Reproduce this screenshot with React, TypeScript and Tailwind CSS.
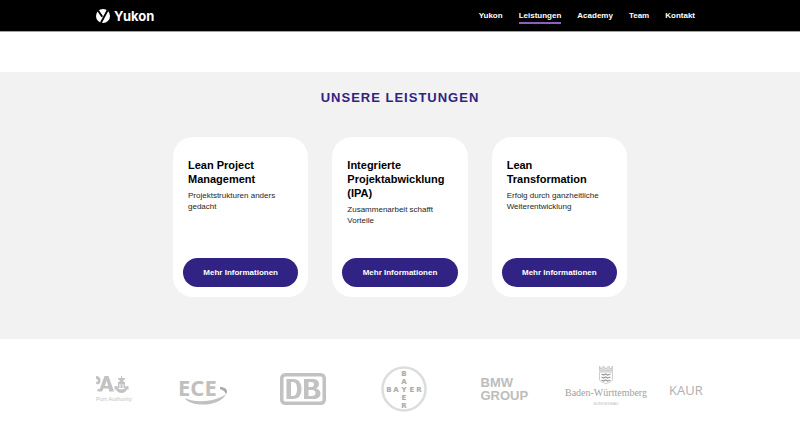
import React from 'react';

interface Service {
  title: string;
  text: string;
  href: string;
}

const navItems = [
  { label: 'Yukon', href: '#yukon', active: false },
  { label: 'Leistungen', href: '#leistungen', active: true },
  { label: 'Academy', href: '#academy', active: false },
  { label: 'Team', href: '#team', active: false },
  { label: 'Kontakt', href: '#kontakt', active: false }
];

const services: Service[] = [
  { title: 'Lean Project Management', text: 'Projektstrukturen anders gedacht', href: '#lean-project' },
  { title: 'Integrierte Projektabwicklung (IPA)', text: 'Zusammenarbeit schafft Vorteile', href: '#ipa' },
  { title: 'Lean Transformation', text: 'Erfolg durch ganzheitliche Weiterentwicklung', href: '#transformation' }
];

const YukonMark: React.FC = () => (
  <svg width="14" height="14" viewBox="0 0 14 14" aria-hidden="true">
    <circle cx="7" cy="7" r="7" fill="#fff" />
    <path d="M2 1.500 6.300 7.800M11.600 1.200 4.800 14" fill="none" stroke="#000" strokeWidth="1.900" />
  </svg>
);

const PortLogo: React.FC = () => (
  <svg width="55" height="36" viewBox="0 0 55 36" fill="#c2c2c2" role="img" aria-label="Port Authority">
    <path d="M0 5c3 0 4.500 1.800 4.500 4.500 0 2-.800 3.300-2.200 4L0 12.500v-1.500c1.200 0 1.800-.500 1.800-1.500S1.200 8 0 8Z" />
    <path d="M8.500 5h4L18 20.500h-4.600L12.500 17.500H7.500l-1.500 3H1.500V18h2.300Zm2.200 4.500L8.800 15h3.300Z" />
    <path d="M25 5h1v2h3v1.500h-1.500V11H29v6h-1.500v-4h-1v4h-2v-4h-1v4H22v-6h1.500V8.500H22V7h3Z" />
    <path d="m18.500 15 4 .500-1 1.200c1 1.100 2.300 1.700 4 1.700s3-.600 4-1.700l-1-1.200 4-.500v4l-1.200-.900C30 20.600 28 22 25.500 22s-4.500-1.400-5.800-3.900l-1.200.900Z" />
    <text x="0" y="30" fontFamily="Liberation Sans, sans-serif" fontSize="6">Port Authority</text>
  </svg>
);

const EceLogo: React.FC = () => (
  <svg width="54" height="44" viewBox="0 0 54 44" fill="#c0c0c0" role="img" aria-label="ECE">
    <text x="3" y="29" fontFamily="Noto Sans, sans-serif" fontSize="22" fontWeight="700">ECE</text>
    <path d="M45 20c4 0 7 1.500 7 4.500 0 1-.300 2-1 3-.800-2.800-2.800-4.500-6-5.500Z" fill="#aaa" />
    <path d="M10 31c9 4.500 24 4.500 36-1l5-2.500c-4 7-14 10.500-25 10-8-.400-14-2.500-16-6.500Z" />
  </svg>
);

const DbLogo: React.FC = () => (
  <svg width="46" height="32" viewBox="0 0 46 32" role="img" aria-label="DB">
    <rect x="1.750" y="1.750" width="42.500" height="28.500" rx="3.500" fill="none" stroke="#c2c2c2" strokeWidth="3.500" />
    <g fill="#c2c2c2" fillRule="evenodd">
      <path d="M6.500 6H13c6 0 8.500 4 8.500 10S19 26 13 26H6.500Zm4.500 3v14h1.500c3.500 0 4.500-2.500 4.500-7s-1-7-4.500-7Z" />
      <path d="M24 6h8c5 0 7 2 7 5 0 2.200-1.200 3.700-3 4.500 2.800.600 4.500 2.400 4.500 5 0 3.500-2.700 5.500-7 5.500H24Zm4.500 3v5h2c2.300 0 3.500-.900 3.500-2.600S33 9 31 9Zm0 8v6H32c2.300 0 3.500-1 3.500-3s-1.200-3-3.500-3Z" />
    </g>
  </svg>
);

const BayerLogo: React.FC = () => (
  <svg width="46" height="48" viewBox="0 0 46 48" role="img" aria-label="Bayer">
    <circle cx="23" cy="24" r="21.500" fill="none" stroke="#ddd" strokeWidth="2.500" />
    <g fill="#a8a8a8" fontFamily="DejaVu Sans, sans-serif" fontSize="7" fontWeight="700" textAnchor="middle">
      <text x="8" y="27">B</text>
      <text x="15" y="27">A</text>
      <text x="23" y="27">Y</text>
      <text x="31" y="27">E</text>
      <text x="38" y="27">R</text>
      <text x="23" y="11">B</text>
      <text x="23" y="19">A</text>
      <text x="23" y="35">E</text>
      <text x="23" y="43">R</text>
    </g>
  </svg>
);

const BmwLogo: React.FC = () => (
  <div className="w-12 text-[13px] leading-[13px] font-bold text-[#bdbdbd]">
    <div>BMW</div>
    <div>GROUP</div>
  </div>
);

const BadenLogo: React.FC = () => (
  <svg width="84" height="46" viewBox="0 0 84 46" role="img" aria-label="Baden-Württemberg Bundesbau">
    <g fill="none" stroke="#b8b8b8">
      <path d="m35.500 0 1.500 3 2.500-3L42 3l2.500-3L47 3l1.500-3v5h-13Z" fill="#ddd" strokeWidth=".6" />
      <path d="M35.500 6h13v7c0 2.500-3 3.500-6.500 4.500-3.500-1-6.500-2-6.500-4.500Z" strokeWidth=".7" />
      <path d="m37.500 8 2 1 2-1 2 1 3-1m-9 3 2 1 2-1 2 1 3-1m-9 3 2 1 2-1 2 1 3-1" stroke="#999" strokeWidth="1.2" />
    </g>
    <text x="42" y="30" textAnchor="middle" fill="#a0a0a0" fontFamily="Liberation Serif, serif" fontSize="10">Baden-Württemberg</text>
    <text x="42" y="39" textAnchor="middle" fill="#c0c0c0" fontFamily="Liberation Sans, sans-serif" fontSize="4">BUNDESBAU</text>
  </svg>
);

const KaurLogo: React.FC = () => (
  <svg width="35" height="20" viewBox="0 0 35 20" fill="#b0b0b0" role="img" aria-label="KAUR">
    <text x="0" y="16" fontFamily="Open Sans, sans-serif" fontSize="13">KAUR</text>
  </svg>
);

const App: React.FC = () => {
  return (
    <div className="min-h-screen bg-white font-['Liberation_Sans',Arial,sans-serif] text-black">
      <header className="bg-black border-b border-neutral-400">
        <div className="w-full px-24 h-[31px] flex items-center justify-between">
          <a href="#yukon" className="flex items-center gap-1 text-white">
            <YukonMark />
            <span className="font-['Inter',sans-serif] text-[13px] leading-4 font-bold">Yukon</span>
          </a>
          <nav className="flex gap-4 pr-[9px] pt-[2px]">
            {navItems.map((item) => (
              <a
                key={item.label}
                href={item.href}
                className={`text-[8px] leading-3 font-bold text-white border-b-2 ${item.active ? 'border-[#8c5fc0]' : 'border-transparent'}`}
              >
                {item.label}
              </a>
            ))}
          </nav>
        </div>
      </header>

      <main>
        <section id="leistungen" className="mt-10 bg-[#f2f2f2] pt-4 pb-[42px]">
          <h2 className="text-center text-[13px] leading-5 font-bold tracking-[1px] text-[#302383] uppercase">
            Unsere Leistungen
          </h2>
          <div className="max-w-[454px] mx-auto mt-[29px] grid grid-cols-3 gap-6">
            {services.map((service) => (
              <article key={service.title} className="min-h-40 bg-white rounded-[20px] px-[10px] pt-[21px] pb-[10px] flex flex-col">
                <div className="px-[5px] pb-4">
                  <h3 className="text-[11px] leading-[14px] font-bold">{service.title}</h3>
                  <p className="mt-1 text-[8px] leading-[11px] text-neutral-800">{service.text}</p>
                </div>
                <a
                  href={service.href}
                  className="mt-auto py-2 rounded-full bg-[#302383] text-white text-center text-[8px] leading-[13px] font-bold"
                >
                  Mehr Informationen
                </a>
              </article>
            ))}
          </div>
        </section>

        {/* Client logos, the outer ones run out of the strip */}
        <section className="mx-24 pt-[26px] pb-6 overflow-hidden grid grid-cols-[55fr_101fr_101fr_101fr_101fr_101fr_48fr] items-center">
          <div className="overflow-hidden"><PortLogo /></div>
          <div className="flex justify-center"><EceLogo /></div>
          <div className="flex justify-center"><DbLogo /></div>
          <div className="flex justify-center"><BayerLogo /></div>
          <div className="flex justify-center"><BmwLogo /></div>
          <div className="flex justify-center"><BadenLogo /></div>
          <div className="pl-[13px] overflow-hidden"><KaurLogo /></div>
        </section>
      </main>
    </div>
  );
};

export default App;
